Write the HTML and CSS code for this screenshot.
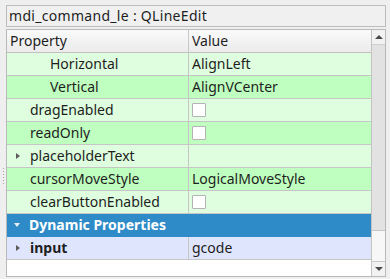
FILE: index.html
```html
<!DOCTYPE html>
<html>
<head>
<meta charset="utf-8">
<link rel="stylesheet" href="styles.css">
</head>
<body>
<div class="page">
  <div class="grip"><span></span><span></span><span></span><span></span><span></span><span></span></div>
  <div class="main">
    <div class="title">mdi_command_le : QLineEdit</div>
    <div class="tree">
      <div class="table">
        <div class="row header">
          <div class="c1">Property</div>
          <div class="c2">Value</div>
        </div>
        <div class="row light">
          <div class="c1 ind2">Horizontal</div>
          <div class="c2">AlignLeft</div>
        </div>
        <div class="row dark">
          <div class="c1 ind2">Vertical</div>
          <div class="c2">AlignVCenter</div>
        </div>
        <div class="row light">
          <div class="c1 ind1">dragEnabled</div>
          <div class="c2"><span class="check"></span></div>
        </div>
        <div class="row dark">
          <div class="c1 ind1">readOnly</div>
          <div class="c2"><span class="check"></span></div>
        </div>
        <div class="row light">
          <div class="c1 ind1"><span class="arrow-right"></span>placeholderText</div>
          <div class="c2"></div>
        </div>
        <div class="row dark">
          <div class="c1 ind1">cursorMoveStyle</div>
          <div class="c2">LogicalMoveStyle</div>
        </div>
        <div class="row light">
          <div class="c1 ind1">clearButtonEnabled</div>
          <div class="c2"><span class="check"></span></div>
        </div>
        <div class="row group">
          <div class="c1 ind1"><span class="arrow-down"></span>Dynamic Properties</div>
        </div>
        <div class="row dyn">
          <div class="c1 ind1 bold"><span class="arrow-right"></span>input</div>
          <div class="c2">gcode</div>
        </div>
        <div class="empty"></div>
      </div>
      <div class="scrollbar">
        <div class="sb-btn"><span class="sb-up"></span></div>
        <div class="sb-handle"></div>
        <div class="sb-track"></div>
        <div class="sb-btn"><span class="sb-down"></span></div>
      </div>
    </div>
  </div>
</div>
</body>
</html>
```

FILE: styles.css
```css
html, body {
  margin: 0;
  padding: 0;
  background: #efefef;
  font-family: "Noto Sans", "Open Sans", sans-serif;
  font-size: 14px;
  color: #1e1e1e;
}

.page {
  display: flex;
  width: 390px;
  height: 279px;
  box-sizing: border-box;
  padding: 5px 4px 2px 0;
}

.grip {
  width: 6px;
  display: flex;
  flex-direction: column;
  align-items: center;
  gap: 2px;
  padding-top: 163px;
  box-sizing: border-box;
}

.grip span {
  width: 1px;
  height: 1px;
  background: #a8a8a8;
}

.main {
  flex: 1;
  display: flex;
  flex-direction: column;
  gap: 2px;
  min-width: 0;
}

.title {
  height: 22px;
  box-sizing: border-box;
  border: 1px solid #bdbdbd;
  background: #f0f0f0;
  padding-left: 2px;
  line-height: 20px;
  letter-spacing: 0.3px;
  white-space: nowrap;
}

.tree {
  flex: 1;
  display: flex;
  border: 1px solid #b9b9b9;
  background: #ffffff;
  min-height: 0;
}

.table {
  flex: 1;
  display: flex;
  flex-direction: column;
  min-width: 0;
}

.row {
  display: flex;
  height: 23px;
  flex-shrink: 0;
  box-sizing: border-box;
  border-bottom: 1px solid #c6c6c6;
  line-height: 22px;
  white-space: nowrap;
}

.c1 {
  width: 182px;
  box-sizing: border-box;
  border-right: 1px solid #c6c6c6;
  display: flex;
  align-items: center;
  padding-left: 3px;
}

.c2 {
  flex: 1;
  display: flex;
  align-items: center;
  padding-left: 3px;
}

.header {
  background: linear-gradient(#fafafa, #ebebeb);
  border-bottom: 1px solid #c2c2c2;
}

.header .c1 {
  border-right-color: #c8c8c8;
}

.light { background: #dffedf; }
.dark { background: #bfffbf; }

.ind1 { padding-left: 23px; }
.ind2 { padding-left: 43px; }

.check {
  width: 12px;
  height: 12px;
  background: #ffffff;
  border: 1px solid #b4b4b4;
  border-radius: 1px;
}

.arrow-right {
  width: 0;
  height: 0;
  border-top: 3.5px solid transparent;
  border-bottom: 3.5px solid transparent;
  border-left: 4px solid #5c5c5c;
  margin-left: -14px;
  margin-right: 10px;
}

.group {
  background: #2e8bc7;
  color: #ffffff;
  font-weight: bold;
  border-bottom-color: #2e8bc7;
}

.group .c1 {
  border-right: none;
  width: auto;
}

.arrow-down {
  width: 0;
  height: 0;
  border-left: 3.5px solid transparent;
  border-right: 3.5px solid transparent;
  border-top: 4px solid #e8eef6;
  margin-left: -16px;
  margin-right: 9px;
}

.dyn {
  background: #dee5fd;
}

.bold {
  font-weight: bold;
}

.empty {
  flex: 1;
  background: #ffffff;
}

.scrollbar {
  width: 13px;
  display: flex;
  flex-direction: column;
  background: #efefef;
  border-left: 1px solid #c3c3c3;
}

.sb-btn {
  height: 14px;
  display: flex;
  align-items: center;
  justify-content: center;
  background: #f2f2f2;
}

.sb-up {
  width: 0;
  height: 0;
  border-left: 4px solid transparent;
  border-right: 4px solid transparent;
  border-bottom: 4px solid #4a4a4a;
}

.sb-down {
  width: 0;
  height: 0;
  border-left: 4px solid transparent;
  border-right: 4px solid transparent;
  border-top: 4px solid #4a4a4a;
}

.sb-handle {
  height: 185px;
  background: #e2e2e2;
  border-top: 1px solid #cfcfcf;
  border-bottom: 1px solid #c6c6c6;
}

.sb-track {
  flex: 1;
  background: #f7f7f7;
  border-bottom: 1px solid #c9c9c9;
}
```
